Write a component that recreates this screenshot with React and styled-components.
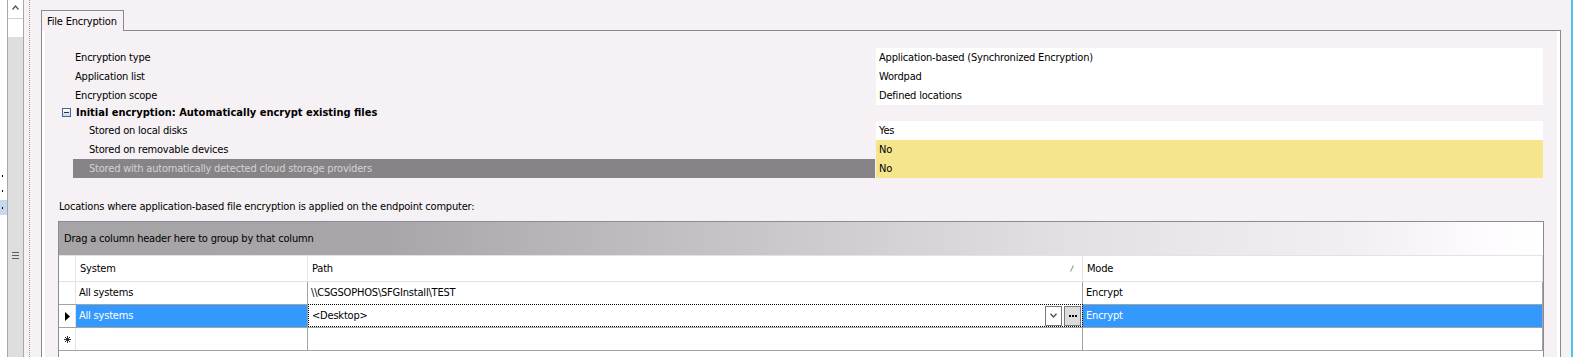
import React from "react";
import styled, { createGlobalStyle } from "styled-components";

const properties = [
    { label: "Encryption type", value: "Application-based (Synchronized Encryption)" },
    { label: "Application list", value: "Wordpad" },
    { label: "Encryption scope", value: "Defined locations" },
];

const initialEncryption = [
    { label: "Stored on local disks", value: "Yes" },
    { label: "Stored on removable devices", value: "No", changed: true },
    {
        label: "Stored with automatically detected cloud storage providers",
        value: "No",
        changed: true,
        selected: true,
    },
];

const locations = [
    { system: "All systems", path: "\\\\CSGSOPHOS\\SFGInstall\\TEST", mode: "Encrypt" },
    { system: "All systems", path: "<Desktop>", mode: "Encrypt", current: true },
];

function App() {
    return (
        <>
            <GlobalStyle />
            <Screen>
                <NavStrip>
                    <NavItem>
                        <Pixel />
                    </NavItem>
                    <NavItem>
                        <Pixel />
                    </NavItem>
                    <NavItem $selected>
                        <Pixel />
                    </NavItem>
                </NavStrip>
                <VScroll>
                    <ArrowButton>
                        <svg width="7" height="5" viewBox="0 0 7 5">
                            <polyline points="0.5,4.5 3.5,1 6.5,4.5" fill="none" stroke="#555" strokeWidth="1.3" />
                        </svg>
                    </ArrowButton>
                    <Track />
                    <Thumb>
                        <Grip>
                            <span />
                            <span />
                            <span />
                        </Grip>
                    </Thumb>
                </VScroll>
                <Splitter />
                <Main>
                    <TabStrip>
                        <Tab>File Encryption</Tab>
                    </TabStrip>
                    <TabPage>
                        <PropGrid>
                            {properties.map((p) => (
                                <PropRow key={p.label}>
                                    <PropLabel>{p.label}</PropLabel>
                                    <PropValue>{p.value}</PropValue>
                                </PropRow>
                            ))}
                            <CategoryRow>
                                <Collapse>
                                    <span />
                                </Collapse>
                                Initial encryption: Automatically encrypt existing files
                            </CategoryRow>
                            {initialEncryption.map((p) => (
                                <PropRow key={p.label}>
                                    <PropLabel $child $selected={p.selected}>
                                        {p.label}
                                    </PropLabel>
                                    <PropValue $changed={p.changed}>{p.value}</PropValue>
                                </PropRow>
                            ))}
                        </PropGrid>
                        <Caption>
                            Locations where application-based file encryption is applied on the endpoint
                            computer:
                        </Caption>
                        <GridBox>
                            <GroupPanel>Drag a column header here to group by that column</GroupPanel>
                            <HeaderRow>
                                <Indicator $header />
                                <HeadCell $w={232}>System</HeadCell>
                                <HeadCell $w={775}>
                                    Path
                                    <SortMark>
                                        <svg width="4" height="7" viewBox="0 0 4 7">
                                            <line x1="3.5" y1="0.5" x2="0.5" y2="6.5" stroke="#9a9a9a" strokeWidth="1.2" />
                                        </svg>
                                    </SortMark>
                                </HeadCell>
                                <HeadCell>Mode</HeadCell>
                            </HeaderRow>
                            {locations.map((row, i) => (
                                <DataRow key={i}>
                                    <Indicator>
                                        {row.current && (
                                            <svg width="5" height="9" viewBox="0 0 5 9">
                                                <polygon points="0,0 5,4.5 0,9" fill="#000" />
                                            </svg>
                                        )}
                                    </Indicator>
                                    <Cell $w={232} $selected={row.current}>
                                        {row.system}
                                    </Cell>
                                    {row.current ? (
                                        <EditCell $w={775}>
                                            <EditText>{row.path}</EditText>
                                            <DropButton>
                                                <svg width="7" height="5" viewBox="0 0 7 5">
                                                    <polyline points="0.5,0.8 3.5,4 6.5,0.8" fill="none" stroke="#555" strokeWidth="1.4" />
                                                </svg>
                                            </DropButton>
                                            <EllipsisButton>
                                                <i />
                                                <i />
                                                <i />
                                            </EllipsisButton>
                                        </EditCell>
                                    ) : (
                                        <Cell $w={775}>{row.path}</Cell>
                                    )}
                                    <Cell $selected={row.current}>{row.mode}</Cell>
                                </DataRow>
                            ))}
                            <DataRow>
                                <Indicator>
                                    <svg width="7" height="7" viewBox="0 0 7 7">
                                        <g stroke="#333" strokeWidth="1">
                                            <line x1="3.5" y1="0" x2="3.5" y2="7" />
                                            <line x1="0" y1="3.5" x2="7" y2="3.5" />
                                            <line x1="1" y1="1" x2="6" y2="6" />
                                            <line x1="6" y1="1" x2="1" y2="6" />
                                        </g>
                                    </svg>
                                </Indicator>
                                <Cell $w={232} />
                                <Cell $w={775} />
                                <Cell />
                            </DataRow>
                        </GridBox>
                    </TabPage>
                </Main>
            </Screen>
        </>
    );
}

export default App;

const GlobalStyle = createGlobalStyle`
    html, body {
        margin: 0;
        padding: 0;
    }
    body {
        background: #f5f1f5;
        font-family: "DejaVu Sans Condensed", "DejaVu Sans", Tahoma, sans-serif;
        font-size: 11px;
        letter-spacing: -0.2px;
        color: #000;
    }
    * {
        box-sizing: border-box;
    }
`;

const Screen = styled.div`
    display: flex;
    width: 1573px;
    height: 357px;
    overflow: hidden;
    border-right: 2px solid #52c2ea;
    background: #f5f1f5;
`;

const NavStrip = styled.div`
    width: 8px;
    flex-shrink: 0;
    background: #fff;
    border-right: 1px solid #a8a8a8;
    padding-top: 168px;
    display: flex;
    flex-direction: column;
`;

const NavItem = styled.div`
    height: 15px;
    display: flex;
    align-items: center;
    background: ${(p) => (p.$selected ? "#c6d9ec" : "transparent")};
    margin-top: ${(p) => (p.$selected ? "2px" : "0")};
`;

const Pixel = styled.span`
    width: 1px;
    height: 2px;
    margin-left: 2px;
    background: #000;
`;

const VScroll = styled.div`
    width: 16px;
    flex-shrink: 0;
    border-right: 1px solid #a8a8a8;
    display: flex;
    flex-direction: column;
    background: #fff;
`;

const ArrowButton = styled.div`
    height: 19px;
    border-bottom: 1px solid #cfcfcf;
    display: flex;
    align-items: center;
    justify-content: center;
    padding-bottom: 3px;
`;

const Track = styled.div`
    height: 18px;
    background: #fff;
`;

const Thumb = styled.div`
    flex: 1;
    background: #dedede;
    padding-top: 215px;
    display: flex;
    justify-content: center;
`;

const Grip = styled.div`
    display: flex;
    flex-direction: column;
    gap: 2px;
    span {
        width: 7px;
        height: 1px;
        background: #5e5e5e;
    }
`;

const Splitter = styled.div`
    width: 6px;
    flex-shrink: 0;
    border-right: 1px dotted #9a9a9a;
`;

const Main = styled.div`
    flex: 1;
    padding: 10px 10px 0 11px;
    display: flex;
    flex-direction: column;
`;

const TabStrip = styled.div`
    display: flex;
    position: relative;
    z-index: 1;
    margin-bottom: -1px;
`;

const Tab = styled.div`
    height: 21px;
    width: 83px;
    padding-left: 5px;
    line-height: 21px;
    border: 1px solid #8a8a8a;
    border-bottom: none;
    background: #f5f1f5;
    white-space: nowrap;
`;

const TabPage = styled.div`
    flex: 1;
    border: 1px solid #8a8a8a;
    border-bottom: none;
    box-shadow: inset 3px 0 0 #fff, inset -3px 0 0 #fff;
    padding: 17px 16px 0 16px;
`;

const PropGrid = styled.div`
    margin: 0 1px;
    display: flex;
    flex-direction: column;
`;

const PropRow = styled.div`
    display: grid;
    grid-template-columns: 816px 1fr;
    column-gap: 1px;
    height: 18px;
    margin-bottom: 1px;
`;

const PropLabel = styled.div`
    margin-left: ${(p) => (p.$child ? "14px" : "0")};
    padding-left: 16px;
    padding-top: 1px;
    line-height: 18px;
    white-space: nowrap;
    background: ${(p) => (p.$selected ? "#878487" : "transparent")};
    color: ${(p) => (p.$selected ? "#d4d2d4" : "#000")};
`;

const PropValue = styled.div`
    padding-left: 3px;
    padding-top: 1px;
    line-height: 18px;
    white-space: nowrap;
    background: ${(p) => (p.$changed ? "#f5e68e" : "#fff")};
`;

const CategoryRow = styled.div`
    height: 15px;
    margin-bottom: 1px;
    display: flex;
    align-items: center;
    gap: 5px;
    padding-left: 3px;
    font-weight: bold;
    letter-spacing: 0;
    white-space: nowrap;
`;

const Collapse = styled.span`
    width: 9px;
    height: 9px;
    border: 1px solid #45658f;
    background: linear-gradient(#ffffff, #c9d7ea);
    display: flex;
    align-items: center;
    justify-content: center;
    span {
        width: 5px;
        height: 1px;
        background: #1c2f4d;
    }
`;

const Caption = styled.div`
    margin-top: 22px;
    padding-left: 1px;
    line-height: 14px;
    white-space: nowrap;
`;

const GridBox = styled.div`
    margin-top: 7px;
    border: 1px solid #8c8a9a;
    background: #fff;
    min-height: 200px;
`;

const GroupPanel = styled.div`
    height: 33px;
    line-height: 34px;
    padding-left: 5px;
    white-space: nowrap;
    background: linear-gradient(
        to right,
        #a6a4a6 0%,
        #a8a6a8 22%,
        #c2c0c2 42%,
        #e2e0e2 68%,
        #f3f0f3 88%,
        #fefbfe 96%,
        #ffffff 100%
    );
`;

const HeaderRow = styled.div`
    display: flex;
    height: 27px;
    border-top: 1px solid #e4e2e4;
    border-bottom: 1px solid #e4e2e4;
`;

const Indicator = styled.div`
    width: 17px;
    flex-shrink: 0;
    border-right: 1px solid #e4e2e4;
    display: flex;
    align-items: center;
    justify-content: center;
    padding-left: 1px;
`;

const HeadCell = styled.div`
    ${(p) => (p.$w ? `width: ${p.$w}px; flex-shrink: 0;` : "flex: 1;")}
    border-right: 1px solid #e4e2e4;
    padding-left: 4px;
    padding-right: 8px;
    display: flex;
    align-items: center;
    justify-content: space-between;
    white-space: nowrap;
`;

const SortMark = styled.span`
    display: flex;
    margin-top: -1px;
`;

const DataRow = styled.div`
    display: flex;
    height: 23px;
    border-bottom: 1px solid #a3a3a3;
`;

const Cell = styled.div`
    ${(p) => (p.$w ? `width: ${p.$w}px; flex-shrink: 0;` : "flex: 1;")}
    border-right: 1px solid #a3a3a3;
    padding-left: 3px;
    line-height: 22px;
    white-space: nowrap;
    background: ${(p) => (p.$selected ? "#3399ff" : "#fff")};
    color: ${(p) => (p.$selected ? "#fff" : "#000")};
`;

const EditCell = styled.div`
    width: ${(p) => p.$w}px;
    flex-shrink: 0;
    border-right: 1px solid #a3a3a3;
    outline: 1px dotted #000;
    outline-offset: -1px;
    margin-top: -1px;
    height: 23px;
    display: flex;
    align-items: center;
    gap: 2px;
    padding: 0 1px 0 4px;
    background: #fff;
`;

const EditText = styled.div`
    flex: 1;
    white-space: nowrap;
`;

const DropButton = styled.div`
    width: 17px;
    height: 20px;
    border: 1px solid #7a7a7a;
    background: #fff;
    display: flex;
    align-items: center;
    justify-content: center;
`;

const EllipsisButton = styled.div`
    width: 17px;
    height: 20px;
    border: 1px solid #7a7a7a;
    background: #dcdcdc;
    display: flex;
    align-items: center;
    justify-content: center;
    gap: 1px;
    i {
        width: 2px;
        height: 2px;
        background: #000;
    }
`;
